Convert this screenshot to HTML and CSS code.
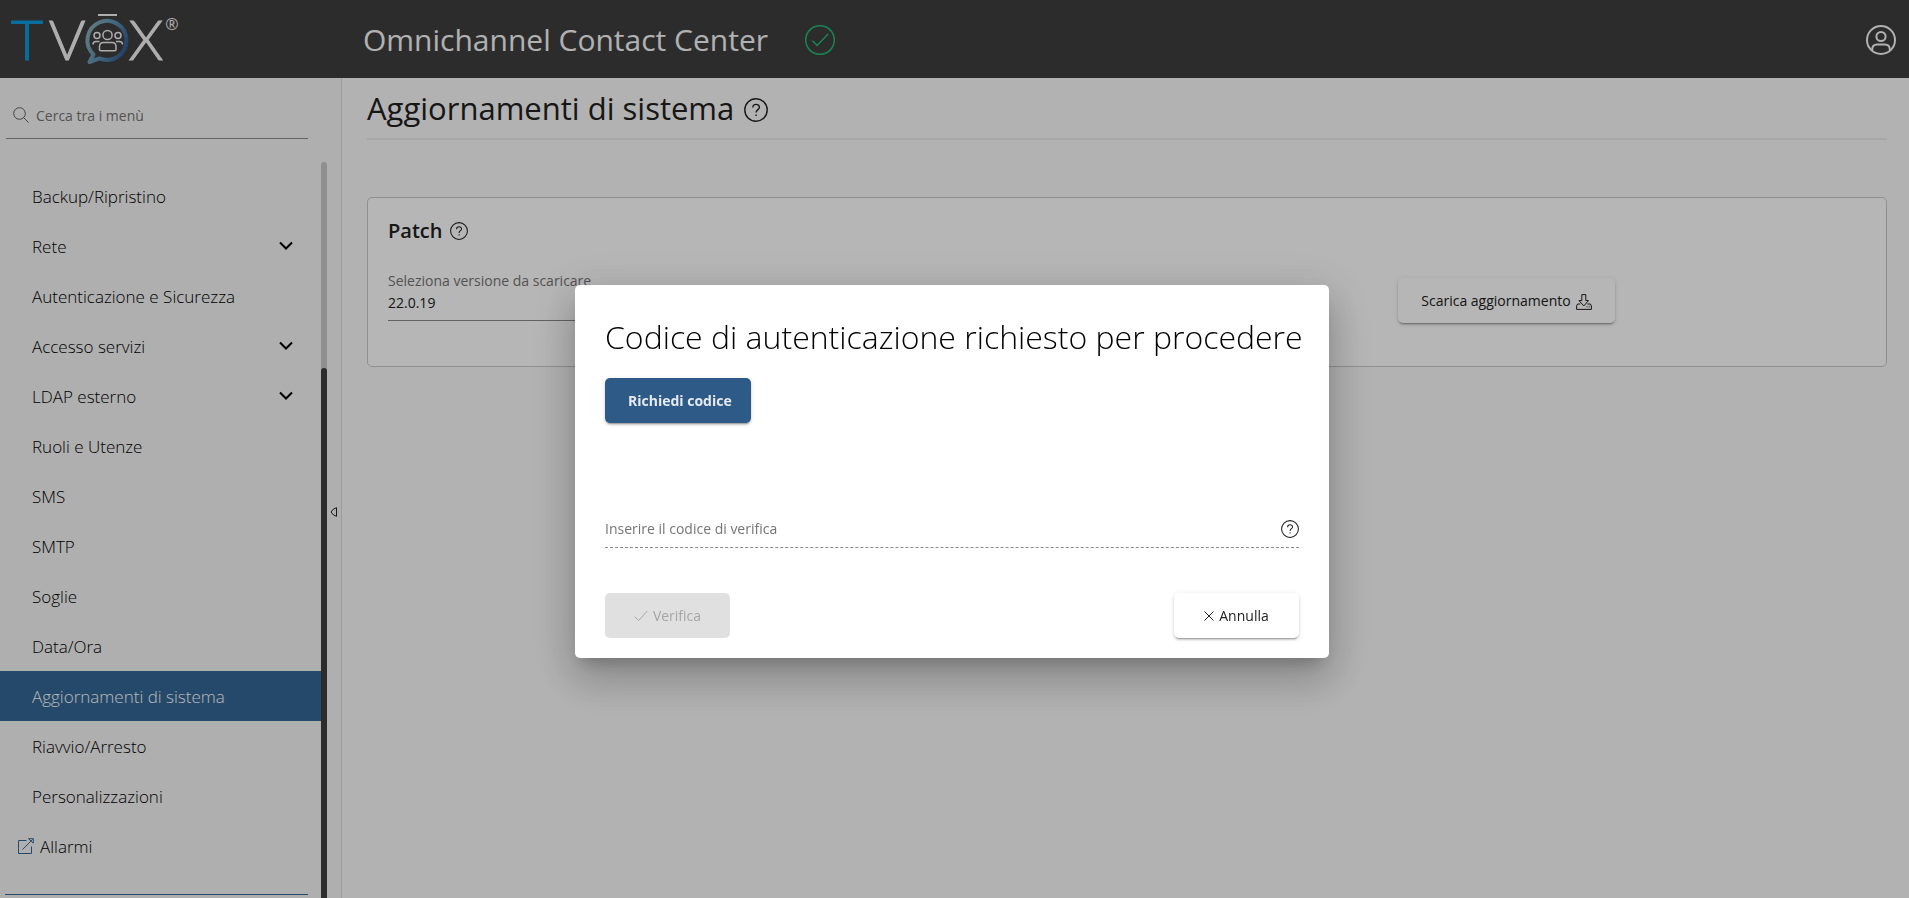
FILE: index.html
```html
<!DOCTYPE html>
<html lang="it">
<head>
<meta charset="utf-8">
<meta name="viewport" content="width=device-width, initial-scale=1">
<title>TVox - Aggiornamenti di sistema</title>
<link rel="stylesheet" href="styles.css">
</head>
<body>
<svg class="sprite" aria-hidden="true">
  <symbol id="i-help" viewBox="0 0 24 24"><circle cx="12" cy="12" r="11.2"/><path d="M8.800 9.500c0-4.200 6.600-4 6.600-.3 0 2.400-3.300 2.500-3.300 5.300M12.100 16.400v1.600"/></symbol>
  <symbol id="i-chevron" viewBox="0 0 16 16"><path d="M2 4.500l6 6 6-6"/></symbol>
</svg>
<div class="app">
  <header class="topbar">
    <a class="logo" href="#" aria-label="TVox">
      <svg width="180" height="78" viewBox="0 0 180 78">
        <defs><linearGradient id="bubble" x1="0" y1="0.3" x2="1" y2="0.8"><stop offset="0" stop-color="#86acb6"/><stop offset="0.5" stop-color="#5b8fb2"/><stop offset="1" stop-color="#2e568c"/></linearGradient></defs>
        <g class="logo-letters">
          <text class="logo-t" x="27" y="59">T</text>
          <text x="67" y="59">V</text>
          <text x="146" y="59">X</text>
          <text class="logo-reg" x="172" y="29">®</text>
        </g>
        <path d="M98 14h19" stroke="#f4f4f4" stroke-width="2"/>
        <path d="M93.500 53.500A19.500 19.500 0 1 1 99.500 57.400L89.500 61z" fill="none" stroke="url(#bubble)" stroke-width="4" stroke-linejoin="round"/>
        <g fill="none" stroke="#f4f4f4" stroke-width="1.500">
          <circle cx="107.500" cy="34" r="4.600"/><circle cx="97" cy="34.500" r="3"/><circle cx="118" cy="34.500" r="3"/>
          <path d="M99.500 48.500v-3q0-4 4-4h8.500q4 0 4 4v3q0 1.200-1.200 1.200h-14q-1.300 0-1.300-1.200zM93 43.500q0-3 3-3h3.500M122.500 43.500q0-3-3-3h-3.500"/>
        </g>
      </svg>
    </a>
    <span class="product">Omnichannel Contact Center</span>
    <svg class="status" viewBox="0 0 30 30" role="img" aria-label="Sistema attivo"><circle cx="15" cy="15" r="14.300"/><path d="M7.500 15.800l4.600 4.600 11-11.500"/></svg>
    <button class="user" type="button" aria-label="Profilo utente">
      <svg width="30" height="30" viewBox="0 0 30 30"><circle cx="15" cy="15" r="14"/><circle cx="15" cy="11.500" r="4.600"/><path d="M6.200 26v-1.500q0-5 5-5h7.600q5 0 5 5v1.500"/></svg>
    </button>
  </header>

  <div class="body">
    <aside class="sidebar">
      <div class="side-main">
        <div class="search">
          <svg viewBox="0 0 16 16"><circle cx="6.500" cy="6.500" r="5.800"/><path d="M10.600 10.600l5 5"/></svg>
          <input type="search" placeholder="Cerca tra i menù" aria-label="Cerca tra i menù">
        </div>
        <div class="scroller">
          <nav class="menu">
            <a class="item" href="#">Backup/Ripristino</a>
            <button class="item" type="button" aria-expanded="false">Rete<svg><use href="#i-chevron"/></svg></button>
            <a class="item" href="#">Autenticazione e Sicurezza</a>
            <button class="item" type="button" aria-expanded="false">Accesso servizi<svg><use href="#i-chevron"/></svg></button>
            <button class="item" type="button" aria-expanded="false">LDAP esterno<svg><use href="#i-chevron"/></svg></button>
            <a class="item" href="#">Ruoli e Utenze</a>
            <a class="item" href="#">SMS</a>
            <a class="item" href="#">SMTP</a>
            <a class="item" href="#">Soglie</a>
            <a class="item" href="#">Data/Ora</a>
            <a class="item active" href="#" aria-current="page">Aggiornamenti di sistema</a>
            <a class="item" href="#">Riavvio/Arresto</a>
            <a class="item" href="#">Personalizzazioni</a>
            <a class="item external" href="#"><svg class="ext" viewBox="0 0 16 16"><path d="M8.500 2.500H.5v13h13V8.500M4.500 11.500L14.500 1.500M10.500.7h4.800v4.500l-2-2z"/></svg>Allarmi</a>
            <hr class="menu-end">
          </nav>
          <div class="track"><div class="thumb"></div></div>
        </div>
      </div>
      <button class="collapse" type="button" aria-label="Chiudi menù"><svg width="8" height="10" viewBox="0 0 8 10"><path d="M1 5Q3.500 1 6.500.7V9.300Q3.500 9 1 5z"/></svg></button>
    </aside>

    <main class="content">
      <div class="page-head">
        <h1>Aggiornamenti di sistema</h1>
        <svg class="help help-lg"><use href="#i-help"/></svg>
      </div>
      <section class="card">
        <div class="col-form">
          <h2>Patch <svg class="help"><use href="#i-help"/></svg></h2>
          <div class="field">
            <label for="versione">Seleziona versione da scaricare</label>
            <select id="versione"><option>22.0.19</option></select>
          </div>
        </div>
        <div class="col-action">
          <button class="btn raised download" type="button">Scarica aggiornamento
            <svg class="dl" viewBox="0 0 16 16"><path d="M5.800.6h4v6h2.700L7.800 12 3 6.600h2.800zM4.200 10H1.600L.6 12v3.400h14.800V12l-1-2h-3M10.500 12.800h1M12.700 12.800h1"/></svg>
          </button>
        </div>
      </section>
    </main>
  </div>
</div>

<div class="overlay">
  <div class="dialog" role="dialog" aria-modal="true" aria-labelledby="dlg-title">
    <h2 class="dialog-title" id="dlg-title">Codice di autenticazione richiesto per procedere</h2>
    <button class="btn primary" type="button">Richiedi codice</button>
    <div class="code-field">
      <input type="text" placeholder="Inserire il codice di verifica" aria-label="Inserire il codice di verifica">
      <svg class="help"><use href="#i-help"/></svg>
    </div>
    <div class="actions">
      <button class="btn action disabled" type="button" disabled><svg width="14" height="12" viewBox="0 0 14 12"><path d="M.7 6.500l4 4L13.300 1"/></svg>Verifica</button>
      <button class="btn action raised" type="button"><svg width="10" height="10" viewBox="0 0 10 10"><path d="M.5.5l9 9M9.500.5l-9 9"/></svg>Annulla</button>
    </div>
  </div>
</div>
</body>
</html>
```

FILE: styles.css
```css
* { box-sizing: border-box; }
body {
  margin: 0;
  font-family: "Segoe UI", "Open Sans", "Noto Sans", sans-serif;
  font-size: 14px;
  color: #212121;
}
svg { fill: none; stroke: currentColor; flex: none; }
button { font: inherit; color: inherit; border: 0; background: none; cursor: pointer; }
input, select { font: inherit; color: inherit; border: 0; background: none; outline: 0; padding: 0; }
.sprite { display: none; }

.app { display: flex; flex-direction: column; height: 100vh; overflow: hidden; }

/* Top bar */
.topbar {
  display: flex;
  align-items: center;
  height: 78px;
  flex: none;
  padding: 2px 13px 0 0;
  background: #3e3e3e;
  color: #f8f8f8;
}
.logo { width: 363px; height: 78px; display: flex; }
.logo svg { stroke: none; }
.logo-letters { font-family: Lato, sans-serif; font-weight: 300; font-size: 56px; fill: #f4f4f4; stroke: #f4f4f4; stroke-width: 1; text-anchor: middle; }
.logo-t { fill: #0a9bdc; stroke: #0a9bdc; }
.logo-reg { font-family: "Open Sans", sans-serif; font-size: 16px; font-weight: 400; stroke: none; }
.product { font-size: 30px; line-height: 40px; }
.status { width: 30px; height: 30px; margin-left: 37px; color: #23b878; stroke-width: 1.500; }
.user { margin-left: auto; padding: 0; display: flex; stroke-width: 2; }

/* Sidebar */
.body { display: flex; flex: 1; min-height: 0; }
.sidebar { display: flex; width: 342px; flex: none; background: #f5f5f5; border-right: 1px solid #dcdcdc; }
.side-main { display: flex; flex-direction: column; width: 327px; }
.search {
  display: flex;
  align-items: center;
  gap: 7px;
  margin: 14px 19px 23px 6px;
  padding-left: 7px;
  height: 47px;
  flex: none;
  border-bottom: 1px solid #8a8a8a;
  color: #616161;
}
.search svg { width: 16px; height: 16px; }
.search input { flex: 1; min-width: 0; }
.search input::placeholder, .code-field input::placeholder { color: #757575; opacity: 1; }
.scroller { display: flex; flex: 1; min-height: 0; }
.menu { flex: 1; padding-top: 9px; overflow: hidden; }
.item {
  display: flex;
  align-items: center;
  justify-content: space-between;
  width: 100%;
  height: 50px;
  padding: 0 27px 0 32px;
  font-size: 17px;
  font-weight: 300;
  color: #000;
  text-align: left;
  text-decoration: none;
}
.item svg { width: 16px; height: 16px; stroke-width: 2; }
.item.active { background: #356796; color: #fff; }
.item.external { justify-content: flex-start; gap: 6px; padding-left: 18px; }
.item .ext { color: #356796; stroke-width: 1; }
.menu-end { margin: 23px 13px 0 5px; border: 0; border-top: 1px solid #356796; }
.track { width: 6px; background: #c9c9c9; border-radius: 3px 3px 0 0; display: flex; flex-direction: column; justify-content: flex-end; }
.thumb { height: 72%; background: #3e3e3e; border-radius: 3px 3px 0 0; }
.collapse { width: 14px; padding: 48px 0 0 3px; display: flex; align-items: center; }

/* Content */
.content { flex: 1; min-width: 0; padding: 0 22px 0 25px; background: #fafafa; }
.page-head { display: flex; align-items: center; gap: 10px; height: 62px; border-bottom: 2px solid #ebebeb; }
.page-head h1 { margin: 0; font-size: 31px; line-height: 40px; font-weight: 400; }
.help { width: 18px; height: 18px; stroke-width: 1.400; }
.help-lg { width: 24px; height: 24px; margin-top: 4px; }
.card {
  display: grid;
  grid-template-columns: 1fr 1fr;
  height: 170px;
  margin-top: 57px;
  background: #fff;
  border: 1px solid #cacaca;
  border-radius: 5px;
}
.col-form { padding: 17px 20px 0; }
.col-form h2 { display: flex; align-items: center; gap: 8px; margin: 0; font-size: 20px; line-height: 32px; font-weight: 600; }
.field { display: flex; flex-direction: column; width: 400px; max-width: 100%; margin-top: 24px; }
.field label { line-height: 20px; color: #757575; }
.field select { appearance: none; height: 30px; padding-bottom: 7px; border-bottom: 1px solid #8a8a8a; }
.col-action { display: flex; justify-content: center; align-items: flex-start; padding-top: 80px; }
.btn {
  display: inline-flex;
  align-items: center;
  justify-content: center;
  gap: 5px;
  height: 45px;
  padding: 0 20px;
  border-radius: 5px;
  font-weight: 500;
}
.btn.download { padding: 0 23px; }
.raised { background: #fff; box-shadow: 0 3px 1px -2px rgba(0,0,0,.2), 0 2px 2px rgba(0,0,0,.14), 0 1px 5px rgba(0,0,0,.12); }
.dl { width: 16px; height: 16px; margin-top: 3px; }

/* Dialog */
.overlay {
  position: fixed;
  inset: 0;
  display: flex;
  align-items: center;
  justify-content: center;
  padding: 45px 5px 0 0;
  background: rgba(0,0,0,.288);
}
.dialog {
  display: flex;
  flex-direction: column;
  width: 754px;
  max-width: 90%;
  padding: 30px 30px 20px;
  background: #fff;
  border-radius: 5px;
  box-shadow: 0 11px 15px -7px rgba(0,0,0,.2), 0 24px 38px 3px rgba(0,0,0,.14), 0 9px 46px 8px rgba(0,0,0,.12);
}
.dialog-title { margin: 0 0 20px; font-size: 32px; line-height: 43px; font-weight: 300; color: #000; white-space: nowrap; }
.primary { align-self: flex-start; padding: 0 19px 0 23px; background: #2d5a87; color: #e6eaee; font-weight: 700; box-shadow: 0 3px 1px -2px rgba(0,0,0,.2), 0 2px 2px rgba(0,0,0,.14), 0 1px 5px rgba(0,0,0,.12); }
.code-field { display: flex; align-items: center; gap: 10px; height: 43px; margin-top: 82px; padding-top: 5px; border-bottom: 1px dashed #8a8a8a; }
.code-field input { flex: 1; min-width: 0; }
.actions { display: flex; justify-content: space-between; margin-top: 45px; }
.action { width: 125px; }
.disabled { background: #e0e0e0; color: #a6a6a6; cursor: default; }
```
